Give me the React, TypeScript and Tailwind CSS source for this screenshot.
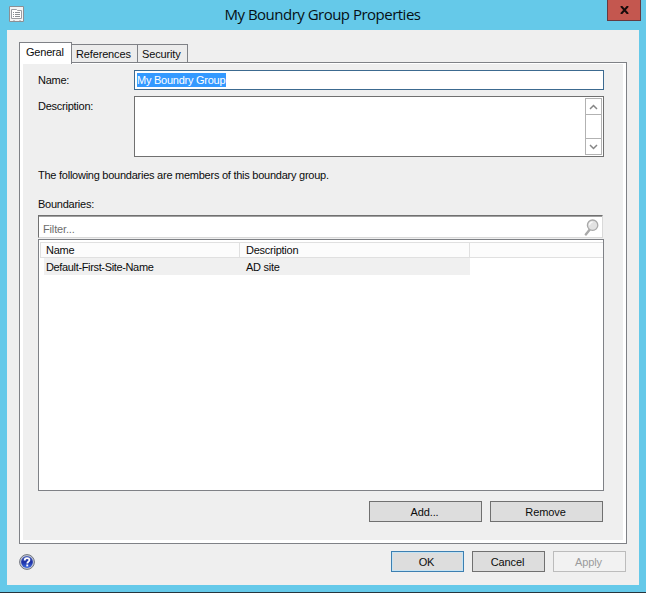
import type { ReactNode } from 'react'
import clsx from 'clsx'

const tabs = [
    { label: 'References', width: 'w-[66px]' },
    { label: 'Security', width: 'w-[50px]' },
]

const boundaries = [{ name: 'Default-First-Site-Name', description: 'AD site' }]

interface DialogButtonProps {
    children: ReactNode
    className?: string
    variant?: 'normal' | 'primary' | 'disabled'
}

function DialogButton({ children, className, variant = 'normal' }: DialogButtonProps) {
    return (
        <button
            disabled={variant === 'disabled'}
            className={clsx(
                'flex h-[21px] items-center justify-center border pr-[2px] pt-px tracking-[-0.1px]',
                variant === 'normal' && 'border-[#707070] bg-[#dddddd]',
                variant === 'primary' && 'border-[#3c7fb1] bg-[#dddddd] shadow-[inset_0_0_0_1px_#c5e3f3]',
                variant === 'disabled' && 'border-[#bcbcbc] bg-[#f2f2f2] text-[#9b9b9b]',
                className,
            )}
        >
            {children}
        </button>
    )
}

function WindowIcon() {
    return (
        <svg width="16" height="17" viewBox="0 0 16 17" fill="none">
            <path d="M.5.5h14v15H.5z" fill="#f4f4f4" stroke="#8b8f94" />
            <path d="M2.5 3.5h5l1 1h4v8h-10z" fill="#fff" stroke="#9a9da2" />
            <path d="M4 6.5h1M6 6.5h5M4 8.5h1M6 8.5h5M4 10.5h1M6 10.5h5" stroke="#8b8f94" />
            <path d="M4 14.5h2M10 14.5h2" stroke="#c4c6c9" />
        </svg>
    )
}

function SearchIcon() {
    return (
        <svg width="16" height="18" viewBox="0 0 16 18" fill="none">
            <path d="M1.8 15.4 6 10.2" stroke="#a9a9a9" strokeWidth="2.4" strokeLinecap="round" />
            <circle cx="8.6" cy="6.2" r="5.2" fill="#e2e2e2" stroke="#a9a9a9" strokeWidth="1.3" />
            <path d="M5.6 6.2a3 3 0 0 1 3-3" stroke="#fafafa" strokeWidth="1.3" />
        </svg>
    )
}

function HelpIcon() {
    return (
        <svg width="17" height="17" viewBox="0 0 17 17" fill="none">
            <defs>
                <linearGradient id="help" x1="0" y1="0" x2="0" y2="1">
                    <stop offset="0" stopColor="#4a61b8" />
                    <stop offset=".5" stopColor="#1c2fa5" />
                    <stop offset="1" stopColor="#3f6be0" />
                </linearGradient>
            </defs>
            <circle cx="8" cy="9" r="7.4" fill="#c5cbd8" stroke="#70747e" />
            <circle cx="8" cy="9" r="5.9" fill="url(#help)" />
            <path d="M5.7 7.4c0-3 4.7-3 4.7-.3 0 1.8-2.1 1.5-2.1 3.3" stroke="#fff" strokeWidth="1.8" />
            <path d="M7.3 11.5h1.9v1.9H7.3z" fill="#fff" />
        </svg>
    )
}

function Chevron({ down = false }: { down?: boolean }) {
    return (
        <svg width="9" height="6" viewBox="0 0 9 6" fill="none" className={down ? 'rotate-180' : ''}>
            <path d="M1 5 4.5 1.5 8 5" stroke="#868686" strokeWidth="1.5" />
        </svg>
    )
}

function TitleBar() {
    return (
        <header className="flex h-[30px] shrink-0 items-start pl-[9px]">
            <div className="w-[25px] pt-[6px]">
                <WindowIcon />
            </div>
            <h1 className="grow pl-[4px] pt-[4px] text-center font-['Open_Sans','Noto_Sans',sans-serif] text-[15px] leading-[20px] tracking-[-0.51px] text-[#061015]">
                My Boundry Group Properties
            </h1>
            <button className="mr-[5px] flex h-[21px] w-[34px] items-center justify-center border border-t-0 border-[#643a42] bg-[#c4574f]">
                <svg width="9" height="8" viewBox="0 0 9 8">
                    <path d="M1 0 8 8M8 0 1 8" stroke="#160b0b" strokeWidth="2" />
                </svg>
            </button>
        </header>
    )
}

function TabStrip() {
    return (
        <nav className="flex h-[20px] items-end">
            <div className="relative z-10 -mb-[2px] h-[22px] w-[53px] self-end border border-b-0 border-[#7f8186] bg-white pl-[6px] pt-[2px] tracking-[-0.2px]">
                General
            </div>
            {tabs.map((tab) => (
                <div
                    key={tab.label}
                    className={clsx(
                        'h-[18px] border border-b-0 border-l-0 border-[#7f8186] bg-[#ececec] pl-[4px] pt-[2px] tracking-[-0.15px]',
                        tab.width,
                    )}
                >
                    {tab.label}
                </div>
            ))}
        </nav>
    )
}

function BoundaryList() {
    return (
        <div className="mt-px h-[252px] w-[566px] border border-[#7f8186] bg-white pl-px pt-[2px]">
            <div className="flex h-[16px] border-b border-l border-t border-[#e0e0e0] bg-[#fcfcfc]">
                <div className="w-[199px] border-r border-[#e0e0e0] pl-[5px]">Name</div>
                <div className="w-[230px] border-r border-[#e0e0e0] pl-[6px]">Description</div>
            </div>
            {boundaries.map((row) => (
                <div key={row.name} className="ml-[4px] flex h-[17px] w-[426px] bg-[#f0f0f0] pt-[2px]">
                    <span className="w-[202px] pl-[2px] tracking-[-0.35px]">{row.name}</span>
                    <span>{row.description}</span>
                </div>
            ))}
        </div>
    )
}

function GeneralPage() {
    return (
        <main className="h-[482px] w-[608px] border border-[#7f8186] bg-white pb-[3px] pl-[3px] pr-[3px] pt-px">
            <div className="flex h-full flex-col bg-[#efefef] pl-[15px] pt-[6px]">
                <div className="flex h-[20px]">
                    <label className="w-[96px] pt-[3px]">Name:</label>
                    <div className="w-[470px] border border-[#3c6a90] bg-white pl-[2px] pt-[2px]">
                        <span className="block h-[14px] w-[89px] whitespace-nowrap bg-[#3399ff] text-white">My Boundry Group</span>
                    </div>
                </div>
                <div className="mt-[6px] flex h-[61px]">
                    <label className="w-[96px] pt-[3px]">Description:</label>
                    <div className="flex w-[470px] justify-end border border-[#707070] bg-white p-px">
                        <div className="flex w-[17px] flex-col border border-[#b2b2b2]">
                            <div className="flex h-[16px] items-center justify-center border-b border-[#b2b2b2]">
                                <Chevron />
                            </div>
                            <div className="grow" />
                            <div className="flex h-[16px] items-center justify-center border-t border-[#b2b2b2]">
                                <Chevron down />
                            </div>
                        </div>
                    </div>
                </div>
                <p className="mt-[11px] whitespace-nowrap">The following boundaries are members of this boundary group.</p>
                <p className="mt-[15px]">Boundaries:</p>
                <div className="mt-[4px] flex h-[23px] w-[565px] justify-between border border-b-[#d9d9d9] border-l-[#707070] border-r-[#d9d9d9] border-t-[#707070] bg-white pl-[4px] pr-[2px] shadow-[inset_0_1px_0_#a0a0a0]">
                    <span className="pt-[6px] tracking-[-0.15px] text-[#6d6d6d]">Filter...</span>
                    <span className="pt-[3px]">
                        <SearchIcon />
                    </span>
                </div>
                <BoundaryList />
                <div className="mt-[10px] flex gap-[8px] pl-[331px]">
                    <DialogButton className="w-[113px]">Add...</DialogButton>
                    <DialogButton className="w-[113px]">Remove</DialogButton>
                </div>
            </div>
        </main>
    )
}

export default function App() {
    return (
        <div className="flex h-[593px] w-[646px] flex-col overflow-hidden border-b border-[#26353d] bg-[#65c9e9] font-['Liberation_Sans',Arial,sans-serif] text-[11px] leading-[14px] tracking-[-0.25px] text-[#0c0c0c]">
            <TitleBar />
            <div className="ml-[7px] flex h-[555px] w-[632px] flex-col bg-[#efefef] pl-[12px] pt-[12px]">
                <TabStrip />
                <GeneralPage />
                <footer className="mt-[7px] flex w-[607px] gap-[8px]">
                    <div className="mr-auto pt-[2px]">
                        <HelpIcon />
                    </div>
                    <DialogButton className="w-[73px]" variant="primary">
                        OK
                    </DialogButton>
                    <DialogButton className="w-[73px]">Cancel</DialogButton>
                    <DialogButton className="w-[73px]" variant="disabled">
                        Apply
                    </DialogButton>
                </footer>
            </div>
        </div>
    )
}
